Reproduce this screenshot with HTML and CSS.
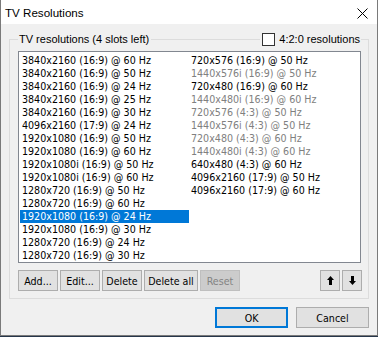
FILE: index.html
```html
<!DOCTYPE html>
<html>
<head>
<meta charset="utf-8">
<title>TV Resolutions</title>
<link rel="stylesheet" href="styles.css">
</head>
<body>
<div class="window">
  <div class="titlebar">
    <span class="title">TV Resolutions</span>
    <svg class="close" width="11" height="11" viewBox="0 0 11 11"><path d="M0.5 0.5 L10.5 10.5 M10.5 0.5 L0.5 10.5" stroke="#000" stroke-width="1" fill="none"/></svg>
  </div>
  <div class="client">
    <div class="group">
      <div class="gb-head">
        <span class="gb-corner-l"></span>
        <span class="gb-label">TV resolutions (4 slots left)</span>
        <span class="gb-line"></span>
        <span class="gb-check"><span class="checkbox"></span><span class="check-text">4:2:0 resolutions</span></span>
        <span class="gb-corner-r"></span>
      </div>
      <div class="gb-body">
        <div class="listbox">
          <div class="cols">
            <div class="item">3840x2160 (16:9) @ 60 Hz</div>
            <div class="item">3840x2160 (16:9) @ 50 Hz</div>
            <div class="item">3840x2160 (16:9) @ 24 Hz</div>
            <div class="item">3840x2160 (16:9) @ 25 Hz</div>
            <div class="item">3840x2160 (16:9) @ 30 Hz</div>
            <div class="item">4096x2160 (17:9) @ 24 Hz</div>
            <div class="item">1920x1080 (16:9) @ 50 Hz</div>
            <div class="item">1920x1080 (16:9) @ 60 Hz</div>
            <div class="item">1920x1080i (16:9) @ 50 Hz</div>
            <div class="item">1920x1080i (16:9) @ 60 Hz</div>
            <div class="item">1280x720 (16:9) @ 50 Hz</div>
            <div class="item">1280x720 (16:9) @ 60 Hz</div>
            <div class="item selected">1920x1080 (16:9) @ 24 Hz</div>
            <div class="item">1920x1080 (16:9) @ 30 Hz</div>
            <div class="item">1280x720 (16:9) @ 24 Hz</div>
            <div class="item">1280x720 (16:9) @ 30 Hz</div>
            <div class="item">720x576 (16:9) @ 50 Hz</div>
            <div class="item dim">1440x576i (16:9) @ 50 Hz</div>
            <div class="item">720x480 (16:9) @ 60 Hz</div>
            <div class="item dim">1440x480i (16:9) @ 60 Hz</div>
            <div class="item dim">720x576 (4:3) @ 50 Hz</div>
            <div class="item dim">1440x576i (4:3) @ 50 Hz</div>
            <div class="item dim">720x480 (4:3) @ 60 Hz</div>
            <div class="item dim">1440x480i (4:3) @ 60 Hz</div>
            <div class="item">640x480 (4:3) @ 60 Hz</div>
            <div class="item">4096x2160 (17:9) @ 50 Hz</div>
            <div class="item">4096x2160 (17:9) @ 60 Hz</div>
          </div>
        </div>
        <div class="btnrow">
          <button class="btn w40">Add...</button>
          <button class="btn w40">Edit...</button>
          <button class="btn w40">Delete</button>
          <button class="btn w54">Delete all</button>
          <button class="btn w40" disabled>Reset</button>
          <span class="spacer"></span>
          <button class="btn sq"><svg width="7" height="9" viewBox="0 0 7 9"><path d="M3.5 0 L7 4 L5 4 L5 9 L2 9 L2 4 L0 4 Z" fill="#000"/></svg></button>
          <button class="btn sq"><svg width="7" height="9" viewBox="0 0 7 9"><path d="M3.5 9 L7 5 L5 5 L5 0 L2 0 L2 5 L0 5 Z" fill="#000"/></svg></button>
        </div>
      </div>
    </div>
    <div class="footer">
      <button class="btn big default">OK</button>
      <button class="btn big">Cancel</button>
    </div>
  </div>
</div>
</body>
</html>
```
FILE: styles.css
```css
html, body {
  margin: 0;
  padding: 0;
}
body {
  background: #26364a;
  width: 378px;
  height: 337px;
  overflow: hidden;
}
.window {
  width: 376px;
  height: 335px;
  border: 1px solid #7a7a7a;
  border-top: none;
  background: #f0f0f0;
  display: flex;
  flex-direction: column;
}
.titlebar {
  height: 24px;
  background: #ffffff;
  display: flex;
  align-items: center;
  padding-left: 4px;
}
.title {
  font-family: "Liberation Sans", Arial, sans-serif;
  font-size: 11.6px;
  color: #000;
  flex: 1;
}
.close {
  margin-right: 9px;
  align-self: flex-start;
  margin-top: 8px;
}
.client {
  flex: 1;
  padding: 8px 8px 0 8px;
  display: flex;
  flex-direction: column;
  font-family: "Liberation Sans", Arial, sans-serif;
  font-size: 11px;
  color: #000;
}
.gb-head {
  height: 14px;
  display: flex;
  align-items: flex-end;
}
.gb-corner-l {
  width: 8px;
  height: 6px;
  border-top: 1px solid #dcdcdc;
  border-left: 1px solid #dcdcdc;
}
.gb-corner-r {
  width: 7px;
  height: 6px;
  border-top: 1px solid #dcdcdc;
  border-right: 1px solid #dcdcdc;
}
.gb-line {
  flex: 1;
  height: 6px;
  border-top: 1px solid #dcdcdc;
}
.gb-label {
  align-self: center;
  padding: 0 2px 0 1px;
  line-height: 14px;
}
.gb-check {
  align-self: center;
  display: flex;
  align-items: center;
  padding-left: 2px;
  padding-right: 1px;
  line-height: 14px;
}
.checkbox {
  width: 11px;
  height: 11px;
  border: 1px solid #333333;
  background: #ffffff;
  margin-right: 4px;
}
.gb-body {
  border: 1px solid #dcdcdc;
  border-top: none;
  padding: 5px 6px 7px 8px;
}
.listbox {
  width: 341px;
  height: 210px;
  border: 1px solid #828790;
  background: #ffffff;
  padding: 0;
  overflow: hidden;
}
.cols {
  display: grid;
  grid-auto-flow: column;
  grid-template-rows: repeat(16, 13px);
  grid-auto-columns: 169px;
  padding: 2px 0 0 1px;
  font-family: "DejaVu Sans Condensed", "DejaVu Sans", sans-serif;
  font-size: 10.6px;
}
.item {
  line-height: 13px;
  height: 13px;
  padding-left: 2px;
  white-space: nowrap;
  color: #000;
}
.item.dim {
  color: #808080;
}
.item.selected {
  background: #0078d7;
  color: #ffffff;
}
.btnrow {
  display: flex;
  gap: 2px;
  margin-top: 7px;
  height: 21px;
}
.spacer {
  flex: 1;
}
.btn {
  box-sizing: border-box;
  height: 21px;
  margin: 0;
  padding: 0;
  background: #e1e1e1;
  border: 1px solid #adadad;
  border-radius: 0;
  font-family: "DejaVu Sans Condensed", "DejaVu Sans", sans-serif;
  font-size: 10.6px;
  color: #000;
  display: flex;
  align-items: center;
  justify-content: center;
}
.btn:disabled {
  background: #cccccc;
  border-color: #bfbfbf;
  color: #838383;
}
.w40 { width: 40px; }
.w54 { width: 54px; }
.sq { width: 20px; }
.footer {
  display: flex;
  justify-content: flex-end;
  gap: 8px;
  margin-top: 8px;
}
.big {
  width: 73px;
  height: 21px;
}
.default {
  border: 2px solid #0078d7;
}
```
